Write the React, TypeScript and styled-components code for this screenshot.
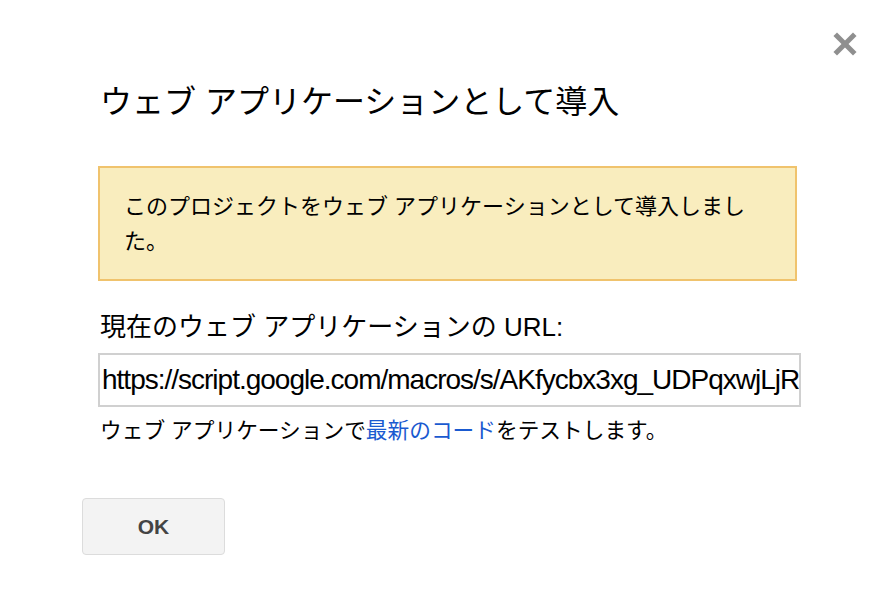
import React from "react";
import styled, { createGlobalStyle } from "styled-components";

const GlobalStyle = createGlobalStyle`
  html, body {
    margin: 0;
    padding: 0;
    background: #ffffff;
  }
  body {
    font-family: "Liberation Sans", "Noto Sans CJK JP", sans-serif;
    color: #222222;
  }
`;

const Dialog = styled.div`
  position: relative;
  width: 896px;
  height: 602px;
  box-sizing: border-box;
  padding: 81px 0 0 98px;
  background: #ffffff;
  font-family: "Liberation Sans", "Noto Sans CJK JP", sans-serif;
`;

const CloseButton = styled.button`
  position: absolute;
  top: 31px;
  left: 832px;
  width: 26px;
  height: 26px;
  padding: 0;
  border: 0;
  background: transparent;
  cursor: pointer;
`;

const Title = styled.h1`
  margin: 0 0 0 2px;
  font-size: 32px;
  line-height: 42px;
  font-weight: normal;
  color: #000000;
`;

const Notice = styled.div`
  margin-top: 43px;
  width: 699px;
  box-sizing: border-box;
  border: 2px solid #f0c36d;
  background: #f9edbe;
  padding: 21px 40px 20px 24px;
  font-size: 22px;
  line-height: 35px;
  color: #000000;
`;

const Label = styled.div`
  margin: 29px 0 0 2px;
  font-size: 26px;
  line-height: 34px;
  color: #000000;
`;

const UrlField = styled.input`
  display: block;
  margin-top: 9px;
  width: 703px;
  height: 54px;
  box-sizing: border-box;
  border: 2px solid #d0d0d0;
  padding: 0 0 0 2px;
  font-family: "Liberation Sans", sans-serif;
  font-size: 28px;
  letter-spacing: -1px;
  color: #000000;
  background: #ffffff;
  outline: none;
`;

const Help = styled.div`
  margin: 10px 0 0 2px;
  font-size: 21.7px;
  line-height: 28px;
  color: #000000;
`;

const Link = styled.a`
  color: #1a5ad0;
  text-decoration: none;
`;

const OkButton = styled.button`
  display: block;
  margin: 53px 0 0 -16px;
  width: 143px;
  height: 57px;
  box-sizing: border-box;
  border: 1px solid #dcdcdc;
  border-radius: 4px;
  background: #f3f3f3;
  font-family: "Liberation Sans", sans-serif;
  font-size: 21px;
  font-weight: bold;
  color: #444444;
  cursor: pointer;
`;

const CloseIcon = () => (
  <svg width="26" height="26" viewBox="0 0 26 26">
    <defs>
      <filter id="soft" x="-20%" y="-20%" width="140%" height="140%">
        <feGaussianBlur stdDeviation="0.7" />
      </filter>
    </defs>
    <g stroke="#8f8f8f" strokeWidth="5" strokeLinecap="square" filter="url(#soft)">
      <line x1="5" y1="5" x2="21" y2="21" />
      <line x1="21" y1="5" x2="5" y2="21" />
    </g>
  </svg>
);

export default function App() {
  return (
    <>
      <GlobalStyle />
      <Dialog>
        <CloseButton aria-label="閉じる">
          <CloseIcon />
        </CloseButton>
        <Title>ウェブ アプリケーションとして導入</Title>
        <Notice>
          このプロジェクトをウェブ アプリケーションとして導入しました。
        </Notice>
        <Label>現在のウェブ アプリケーションの URL:</Label>
        <UrlField
          readOnly
          value="https://script.google.com/macros/s/AKfycbx3xg_UDPqxwjLjRk2Vt9aQw/exec"
        />
        <Help>
          ウェブ アプリケーションで<Link href="#">最新のコード</Link>をテストします。
        </Help>
        <OkButton>OK</OkButton>
      </Dialog>
    </>
  );
}
